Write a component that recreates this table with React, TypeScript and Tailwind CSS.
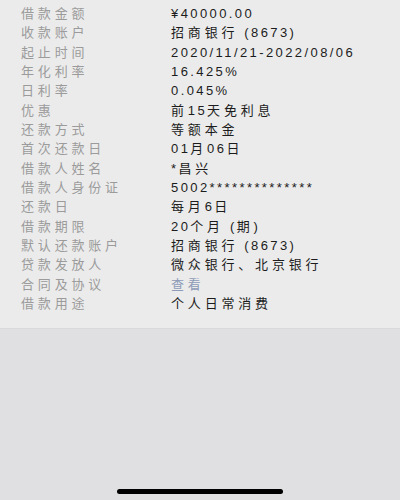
import React from "react";

const rows: { label: string; value: string; link?: boolean }[] = [
  { label: "借款金额", value: "¥40000.00" },
  { label: "收款账户", value: "招商银行 (8673)" },
  { label: "起止时间", value: "2020/11/21-2022/08/06" },
  { label: "年化利率", value: "16.425%" },
  { label: "日利率", value: "0.045%" },
  { label: "优惠", value: "前15天免利息" },
  { label: "还款方式", value: "等额本金" },
  { label: "首次还款日", value: "01月06日" },
  { label: "借款人姓名", value: "*昌兴" },
  { label: "借款人身份证", value: "5002**************" },
  { label: "还款日", value: "每月6日" },
  { label: "借款期限", value: "20个月 (期)" },
  { label: "默认还款账户", value: "招商银行 (8673)" },
  { label: "贷款发放人", value: "微众银行、北京银行" },
  { label: "合同及协议", value: "查看", link: true },
  { label: "借款用途", value: "个人日常消费" },
];

// cjk glyphs get wider tracking than latin ones
function Spaced({ text }: { text: string }) {
  return (
    <>
      {Array.from(text).map((ch, i) =>
        ch.charCodeAt(0) > 0x2e80 ? (
          <span key={i} className="tracking-[3.8px]">
            {ch}
          </span>
        ) : (
          <span key={i} className="tracking-[2.4px]">
            {ch}
          </span>
        )
      )}
    </>
  );
}

export default function App() {
  return (
    <div
      className="w-[400px] h-[500px] bg-[#e0e0e2] flex flex-col overflow-hidden"
      style={{ fontFamily: '"Liberation Sans", "Noto Sans CJK SC", sans-serif' }}
    >
      <div className="bg-[#ebebeb] border-b border-[#d9d9d9] pt-[4px] pb-[14px]">
        {rows.map((r) => (
          <div key={r.label} className="flex h-[19.35px] items-center text-[13px]">
            <div className="w-[171px] pl-[21px] text-[#9b9b9b]">
              <Spaced text={r.label} />
            </div>
            <div className={r.link ? "text-[#8d9bb8]" : "text-[#1c1c1c]"}>
              <Spaced text={r.value} />
            </div>
          </div>
        ))}
      </div>
      <div className="flex-1" />
      <div className="flex justify-center pb-[6px]">
        <div className="w-[166px] h-[5px] rounded-full bg-black" />
      </div>
    </div>
  );
}
